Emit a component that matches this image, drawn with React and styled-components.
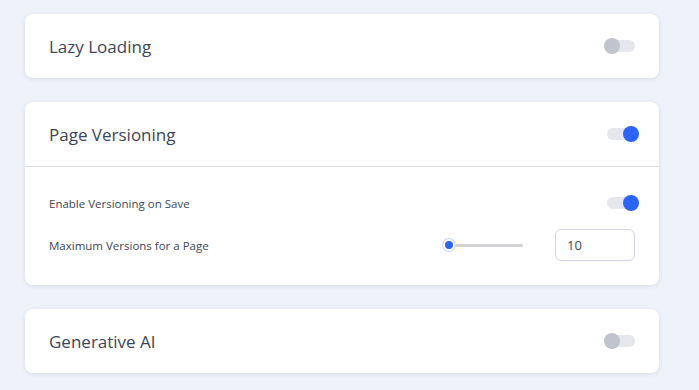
import React, { useState } from "react";
import styled, { createGlobalStyle } from "styled-components";

const GlobalStyle = createGlobalStyle`
  html, body {
    margin: 0;
    padding: 0;
    background: #eff2f9;
  }
  body {
    font-family: "Open Sans", "Noto Sans", sans-serif;
    color: #3d4559;
  }
`;

const Page = styled.div`
  display: flex;
  flex-direction: column;
  gap: 24px;
  padding: 14px 40px 16px 25px;
  width: 634px;
`;

const Card = styled.div`
  background: #fff;
  border-radius: 8px;
  box-shadow: 0 1px 4px rgba(40, 50, 90, 0.12);
`;

const Header = styled.div`
  display: flex;
  align-items: center;
  justify-content: space-between;
  height: 64px;
  padding: 0 24px;
  border-bottom: ${(p) => (p.divided ? "1px solid #dcdcf2" : "none")};
`;

const Title = styled.h2`
  margin: 0;
  font-size: 17px;
  font-weight: 400;
  color: #3d4559;
`;

const Body = styled.div`
  display: flex;
  flex-direction: column;
  gap: 10px;
  padding: 20px 24px 24px;
`;

const Row = styled.div`
  display: flex;
  align-items: center;
  justify-content: space-between;
  height: 32px;
`;

const Label = styled.span`
  font-size: 11.5px;
  color: #3d4559;
`;

const Track = styled.button`
  position: relative;
  width: 28px;
  height: 12px;
  border: none;
  padding: 0;
  border-radius: 6px;
  background: #e6e7ec;
  cursor: pointer;
  &::after {
    content: "";
    position: absolute;
    top: -2px;
    left: ${(p) => (p.on ? "16px" : "-3px")};
    width: 16px;
    height: 16px;
    border-radius: 50%;
    background: ${(p) => (p.on ? "#2d63f6" : "#c2c4cd")};
  }
`;

const Controls = styled.div`
  display: flex;
  align-items: center;
  gap: 32px;
`;

const Slider = styled.div`
  position: relative;
  width: 78px;
  height: 3px;
  border-radius: 2px;
  background: #d2d2d8;
`;

const Thumb = styled.span`
  position: absolute;
  top: 50%;
  width: 8px;
  height: 8px;
  border-radius: 50%;
  background: #2d63f6;
  border: 2px solid #fff;
  box-shadow: 0 0 0 1px #c8d4fb;
  transform: translate(-50%, -50%);
`;

const NumberBox = styled.input`
  box-sizing: border-box;
  width: 80px;
  height: 32px;
  border: 1px solid #d4d4f2;
  border-radius: 6px;
  padding: 0 11px;
  font-family: "Open Sans", "Noto Sans", sans-serif;
  font-size: 13px;
  color: #3d4559;
  outline: none;
`;

function Toggle({ initial }) {
  const [on, setOn] = useState(initial);
  return <Track on={on ? 1 : 0} onClick={() => setOn(!on)} aria-pressed={on} />;
}

export default function App() {
  const [max, setMax] = useState(10);
  const pct = ((max - 5) / 95) * 100;
  return (
    <>
      <GlobalStyle />
      <Page>
        <Card>
          <Header>
            <Title>Lazy Loading</Title>
            <Toggle initial={false} />
          </Header>
        </Card>
        <Card>
          <Header divided>
            <Title>Page Versioning</Title>
            <Toggle initial={true} />
          </Header>
          <Body>
            <Row>
              <Label>Enable Versioning on Save</Label>
              <Toggle initial={true} />
            </Row>
            <Row>
              <Label>Maximum Versions for a Page</Label>
              <Controls>
                <Slider>
                  <Thumb style={{ left: `${pct}%` }} />
                </Slider>
                <NumberBox
                  type="text"
                  value={max}
                  onChange={(e) => setMax(Number(e.target.value) || 0)}
                />
              </Controls>
            </Row>
          </Body>
        </Card>
        <Card>
          <Header>
            <Title>Generative AI</Title>
            <Toggle initial={false} />
          </Header>
        </Card>
      </Page>
    </>
  );
}
